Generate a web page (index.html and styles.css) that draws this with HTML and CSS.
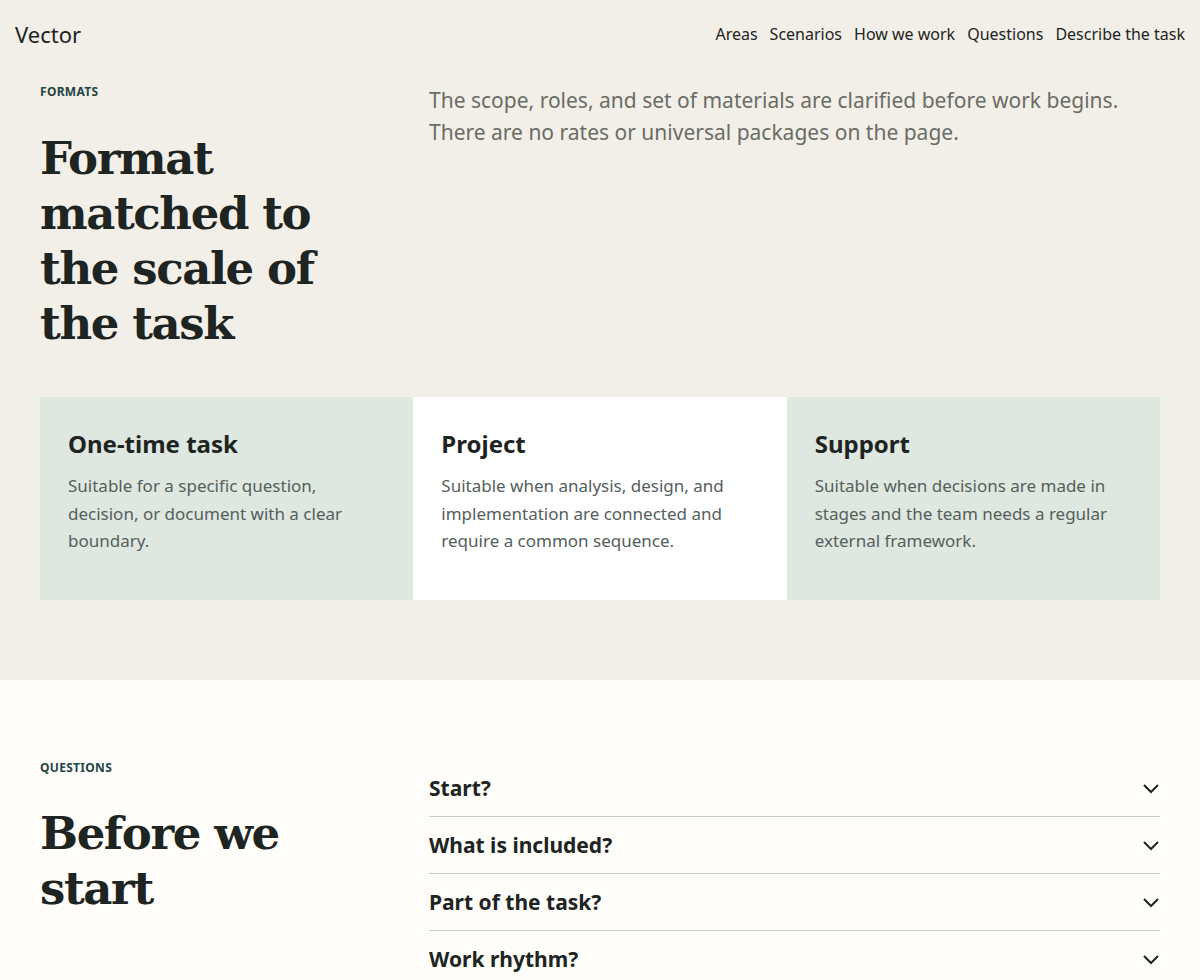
FILE: index.html
```html
<!DOCTYPE html>
<html lang="en">
<head>
    <meta charset="UTF-8">
    <meta name="viewport" content="width=device-width, initial-scale=1.0">
    <title>Vector</title>
    <link rel="stylesheet" href="styles.css">
</head>
<body>
    <header class="site-header">
        <a class="logo" href="#">Vector</a>
        <nav class="nav">
            <a href="#areas">Areas</a>
            <a href="#scenarios">Scenarios</a>
            <a href="#how">How we work</a>
            <a href="#questions">Questions</a>
            <a href="#contact">Describe the task</a>
        </nav>
    </header>

    <section class="formats" id="formats">
        <div class="intro">
            <div>
                <p class="eyebrow">Formats</p>
                <h2 class="title">Format matched to the scale of the task</h2>
            </div>
            <p class="lead">The scope, roles, and set of materials are clarified before work begins. There are no rates or universal packages on the page.</p>
        </div>

        <div class="cards">
            <div class="card card-tint">
                <h3>One-time task</h3>
                <p>Suitable for a specific question, decision, or document with a clear boundary.</p>
            </div>
            <div class="card">
                <h3>Project</h3>
                <p>Suitable when analysis, design, and implementation are connected and require a common sequence.</p>
            </div>
            <div class="card card-tint">
                <h3>Support</h3>
                <p>Suitable when decisions are made in stages and the team needs a regular external framework.</p>
            </div>
        </div>
    </section>

    <section class="questions" id="questions">
        <div class="intro">
            <div>
                <p class="eyebrow">Questions</p>
                <h2 class="title">Before we start</h2>
            </div>
            <div class="faq">
                <button class="faq-item">Start?
                    <svg width="18" height="18" viewBox="0 0 18 18"><polyline points="2,6 9,13 16,6" /></svg>
                </button>
                <button class="faq-item">What is included?
                    <svg width="18" height="18" viewBox="0 0 18 18"><polyline points="2,6 9,13 16,6" /></svg>
                </button>
                <button class="faq-item">Part of the task?
                    <svg width="18" height="18" viewBox="0 0 18 18"><polyline points="2,6 9,13 16,6" /></svg>
                </button>
                <button class="faq-item">Work rhythm?
                    <svg width="18" height="18" viewBox="0 0 18 18"><polyline points="2,6 9,13 16,6" /></svg>
                </button>
            </div>
        </div>
    </section>
</body>
</html>
```

FILE: styles.css
```css
body {
    margin: 0;
    font-family: "Noto Sans", "Open Sans", sans-serif;
    color: #1d2421;
    background-color: #fefdfa;
}

a {
    color: inherit;
    text-decoration: none;
}

.site-header {
    display: flex;
    justify-content: space-between;
    align-items: center;
    height: 68px;
    padding: 0 15px;
    background-color: #f2efe8;
}

.logo {
    font-size: 22px;
}

.nav {
    display: flex;
    gap: 12px;
    font-size: 16px;
}

.formats {
    background-color: #f2efe8;
    padding: 16px 40px 80px;
}

.intro {
    display: grid;
    grid-template-columns: 325px 1fr;
    gap: 64px;
}

.eyebrow {
    margin: 0;
    font-size: 12px;
    line-height: 16px;
    font-weight: 700;
    letter-spacing: 0.3px;
    text-transform: uppercase;
    color: #1f4545;
}

.title {
    margin: 31px 0 0;
    font-family: "DejaVu Serif", Georgia, serif;
    font-size: 45px;
    line-height: 55px;
    font-weight: 700;
    letter-spacing: -1.4px;
    color: #1d2421;
}

.lead {
    margin: 0;
    max-width: 720px;
    font-size: 21px;
    line-height: 32px;
    color: #6a6c66;
}

.cards {
    display: grid;
    grid-template-columns: repeat(3, 1fr);
    margin-top: 46px;
}

.card {
    background-color: #ffffff;
    padding: 31px 28px 45px;
}

.card-tint {
    background-color: #dee7e0;
}

.card h3 {
    margin: 0;
    font-size: 24px;
    line-height: 32px;
    font-weight: 700;
}

.card p {
    margin: 12px 0 0;
    font-size: 17px;
    line-height: 27.5px;
    color: #55605b;
}

.questions {
    padding: 80px 40px 40px;
}

.questions .title {
    margin-top: 30px;
}

.faq {
    display: flex;
    flex-direction: column;
}

.faq-item {
    display: flex;
    justify-content: space-between;
    align-items: center;
    padding: 14px 0;
    border: none;
    border-bottom: 1px solid #c9cfcb;
    background: none;
    font-family: inherit;
    font-size: 21px;
    line-height: 28px;
    font-weight: 700;
    color: #1d2421;
    text-align: left;
    cursor: pointer;
}

.faq-item svg {
    fill: none;
    stroke: #1d2421;
    stroke-width: 2;
}
```
